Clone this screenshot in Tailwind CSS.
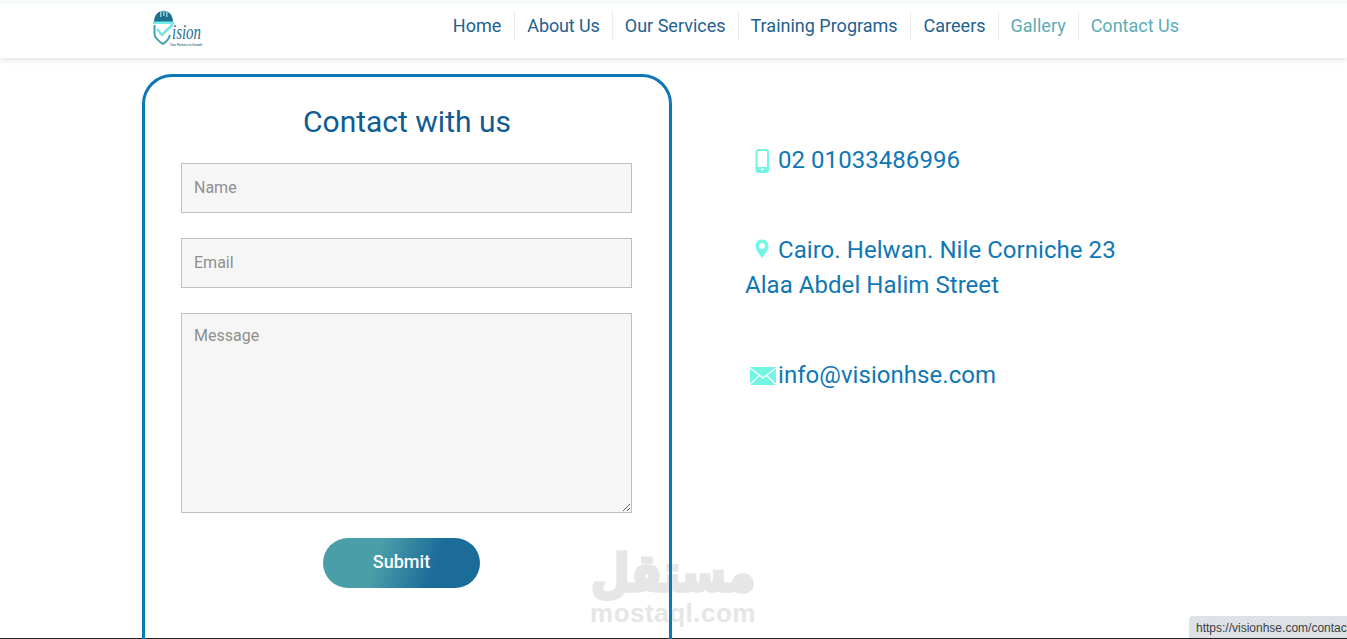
<!doctype html>
<html lang="en">
<head>
<meta charset="utf-8">
<script src="https://cdn.jsdelivr.net/npm/@tailwindcss/browser@4"></script>
</head>
<body class="relative h-[639px] w-[1347px] overflow-hidden bg-white font-['Roboto',sans-serif]">
<header class="h-[58px] border-t-[4px] border-[#f7fbfc] bg-white shadow-[0_2px_6px_rgba(0,0,0,0.12)]">
  <div class="flex h-[54px] items-start pl-[152px] pr-[168px]">
    <a class="mt-[6px] flex h-[38px] w-[52px] items-start" href="#">
      <svg class="overflow-visible" width="52" height="38" viewBox="0 0 52 38">
        <path d="M2 12C2 4 7 1 11.500 1S21 4 21 12Z" fill="#1f6f8f"/>
        <path d="M8 1h1.500v6H8zM11 0h1.500v6H11zM14 1h1.500v6H14z" fill="#8fd0d8"/>
        <path d="M1 11.500h21v2.500H1z" fill="#72efe4"/>
        <path d="M2.500 15V24C3 29 8 32 11 34C14 32 17 29 18 25" fill="none" stroke="#4a9fb0" stroke-width="2"/>
        <path d="M5 19L10 25L21 14" fill="none" stroke="#72e8e0" stroke-width="2.500"/>
        <text x="20" y="29" font-family="Liberation Serif" font-style="italic" font-size="20" fill="#1f6f8f" textLength="29" lengthAdjust="spacingAndGlyphs">ision</text>
        <text x="18" y="35.500" font-family="Liberation Sans" font-weight="700" font-size="4" fill="#31708f" textLength="32" lengthAdjust="spacingAndGlyphs">Your Partners in Growth</text>
      </svg>
    </a>
    <nav class="ml-auto mt-[7px] flex text-[18px] leading-[30px] text-[#22618f]">
      <a class="border-r border-[#ececec] pr-[13px]" href="#">Home</a>
      <a class="border-r border-[#ececec] pl-[12px] pr-[12px] tracking-[-0.1px]" href="#">About Us</a>
      <a class="border-r border-[#ececec] px-[12px]" href="#">Our Services</a>
      <a class="border-r border-[#ececec] px-[12px]" href="#">Training Programs</a>
      <a class="border-r border-[#ececec] pl-[13px] pr-[12px]" href="#">Careers</a>
      <a class="border-r border-[#ececec] px-[12px] text-[#5aadb6]" href="#">Gallery</a>
      <a class="pl-[12px] text-[#5aadb6]" href="#">Contact Us</a>
    </nav>
  </div>
</header>
<main class="relative z-10 flex items-start pl-[142px] pt-[16px]">
  <section class="h-[600px] w-[530px] rounded-[30px] border-[3px] border-[#0f77b5] px-[36px] pt-[25px]">
    <h2 class="mb-[21px] text-center text-[30px] leading-[40px] font-normal text-[#0f5c92]">Contact with us</h2>
    <form class="flex flex-col">
      <input class="mb-[25px] h-[50px] w-[451px] border border-[#c0c0c0] bg-[#f6f6f6] px-[12px] pb-[2px] text-[16px] placeholder:text-[#8f8f8f]" placeholder="Name">
      <input class="mb-[25px] h-[50px] w-[451px] border border-[#c0c0c0] bg-[#f6f6f6] px-[12px] pb-[2px] text-[16px] placeholder:text-[#8f8f8f]" placeholder="Email">
      <textarea class="mb-[25px] h-[200px] w-[451px] border border-[#c0c0c0] bg-[#f6f6f6] px-[12px] py-[12px] text-[16px] leading-[20px] placeholder:text-[#8f8f8f]" placeholder="Message"></textarea>
      <button class="ml-[142px] h-[50px] w-[157px] rounded-[25px] bg-[linear-gradient(110deg,#4a9ea8_35%,#1b6c99_70%)] pb-[3px] text-[18px] font-medium text-white" type="button">Submit</button>
    </form>
  </section>
  <section class="ml-[73px] w-[400px] pt-[69px] text-[24px] leading-[35px] tracking-[0.05px] text-[#0f77b5]">
    <p class="flex items-center">
      <svg class="ml-[9px] mr-[8px]" width="16" height="24" viewBox="0 0 16 24"><rect x="2.500" y="1" width="11.500" height="22" rx="2" fill="none" stroke="#72f5e4" stroke-width="2"/><rect x="2.500" y="18" width="11.500" height="4.500" fill="#72f5e4"/><circle cx="8.200" cy="20.200" r="1.200" fill="#fff"/></svg>
      <span>02 01033486996</span>
    </p>
    <p class="mt-[55px] w-[400px]">
      <svg class="ml-[10px] mr-[9px] inline-block align-[-1px]" width="14" height="20" viewBox="0 0 14 20"><path fill-rule="evenodd" d="M7 0.500C3.200 0.500.500 3.300.500 7C.500 11 4.500 15.500 7 19C9.500 15.500 13.500 11 13.500 7C13.500 3.300 10.800.500 7 .500ZM7 4A3 3 0 1 1 7 10A3 3 0 1 1 7 4Z" fill="#72f5e4"/></svg>Cairo. Helwan. Nile Corniche 23<br>Alaa Abdel Halim Street
    </p>
    <p class="mt-[55px] flex items-center">
      <svg class="ml-[5px] mr-[2px]" width="26" height="18" viewBox="0 0 26 18"><rect width="26" height="18" fill="#72f5e4"/><path d="M0 1L13 11L26 1M0 17.500L9.500 8.500M26 17.500L16.500 8.500" fill="none" stroke="#fff" stroke-width="1.300"/></svg>
      <span>info@visionhse.com</span>
    </p>
  </section>
</main>
<div class="pointer-events-none absolute left-[585px] top-[538px] w-[176px] text-center font-['Liberation_Sans',sans-serif] font-bold text-[#e6e6e6]">
  <div lang="ar" dir="rtl" class="origin-top scale-y-[1.15] font-['DejaVu_Sans',sans-serif] text-[45px] leading-[62px] [-webkit-text-stroke:3px_#e6e6e6]">مستقل</div>
  <div class="mt-[-2px] text-[26px] leading-[30px] tracking-[0.5px]">mostaql.com</div>
</div>
<div class="absolute bottom-[1px] right-0 h-[22px] w-[158px] overflow-hidden whitespace-nowrap rounded-tl-[4px] bg-[#dee1e6] pl-[7px] font-['Liberation_Sans',sans-serif] text-[12px] leading-[24px] text-[#3c4043]">https://visionhse.com/contact</div>
<div class="absolute bottom-0 left-0 h-[1px] w-full bg-[#222]"></div>
</body>
</html>
